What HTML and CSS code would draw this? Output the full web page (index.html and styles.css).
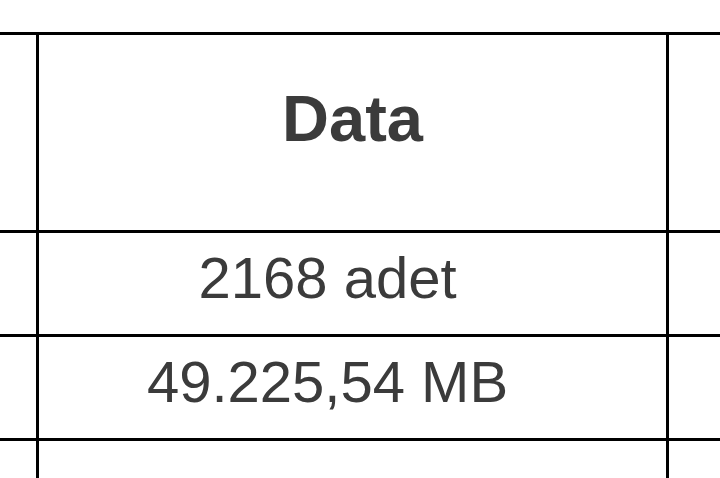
FILE: index.html
```html
<!DOCTYPE html>
<html lang="tr">
<head>
<meta charset="utf-8">
<title>Data</title>
<link rel="stylesheet" href="styles.css">
</head>
<body>
<table class="sheet">
  <colgroup>
    <col class="col-left">
    <col class="col-mid">
    <col class="col-right">
  </colgroup>
  <tr class="head-row">
    <td class="side"></td>
    <th class="mid head">Data</th>
    <td class="side"></td>
  </tr>
  <tr class="data-row">
    <td class="side"></td>
    <td class="mid value">2168 adet</td>
    <td class="side"></td>
  </tr>
  <tr class="data-row">
    <td class="side"></td>
    <td class="mid value">49.225,54 MB</td>
    <td class="side"></td>
  </tr>
  <tr class="tail-row">
    <td class="side"></td>
    <td class="mid"></td>
    <td class="side"></td>
  </tr>
</table>
</body>
</html>
```

FILE: styles.css
```css
html, body {
  margin: 0;
  padding: 0;
  background: #ffffff;
  overflow: hidden;
}

.sheet {
  margin-top: 32px;
  width: 720px;
  table-layout: fixed;
  border-collapse: separate;
  border-spacing: 0;
  border-top: 3px solid #000;
  font-family: "Liberation Sans", Arial, sans-serif;
  color: #3b3b3b;
}

.col-left { width: 36px; }
.col-mid { width: 633px; }
.col-right { width: 51px; }

.sheet td,
.sheet th {
  padding: 0;
  border-bottom: 3px solid #000;
  vertical-align: top;
  box-sizing: border-box;
}

.mid {
  border-left: 3px solid #000;
  border-right: 3px solid #000;
  text-align: center;
}

.head {
  font-size: 65px;
  line-height: 65px;
  font-weight: 700;
  padding-top: 51px !important;
  height: 198px;
}

.head-row .side { height: 198px; }

.value {
  font-size: 58px;
  line-height: 58px;
  font-weight: 400;
  padding-top: 16px !important;
  padding-right: 50px !important;
  height: 104px;
}

.data-row .side { height: 104px; }

.tail-row td {
  height: 60px;
  border-bottom: none;
}
```
